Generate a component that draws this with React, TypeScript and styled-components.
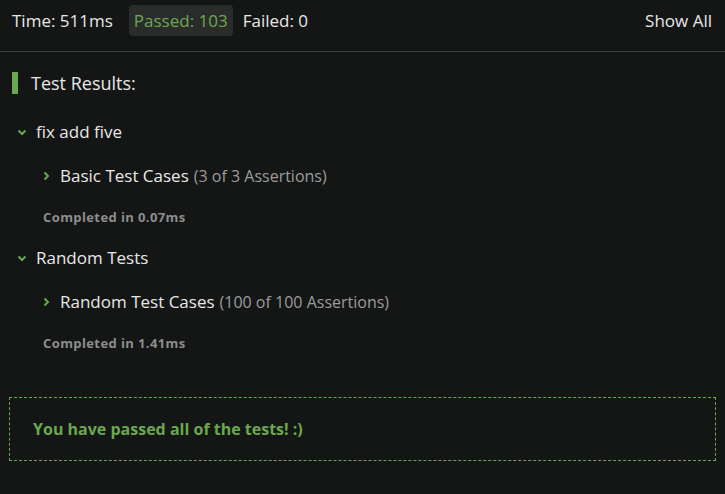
import styled, { createGlobalStyle } from "styled-components";

const GlobalStyle = createGlobalStyle`
  html, body {
    margin: 0;
    padding: 0;
    background: #141515;
  }
  body {
    font-family: "Open Sans", "Noto Sans", sans-serif;
    color: #e8e8e8;
  }
`;

const Pagina = styled.div`
  width: 725px;
  height: 494px;
  background: #141515;
  overflow: hidden;
`;

const Cabecalho = styled.div`
  display: flex;
  align-items: center;
  height: 52px;
  box-sizing: border-box;
  padding: 0 13px 10px 12px;
  border-bottom: 1px solid #3b3c3c;
  font-size: 17px;
  line-height: 22px;
`;

const Info = styled.span`
  margin-right: 16px;
`;

const Selo = styled.span`
  display: inline-flex;
  align-items: center;
  height: 31px;
  padding: 0 5px;
  margin-right: 10px;
  border-radius: 4px;
  background: #2a2c2c;
  color: #6aa84f;
`;

const MostrarTodos = styled.span`
  margin-left: auto;
`;

const Corpo = styled.div`
  padding: 20px 9px 0 9px;
`;

const Titulo = styled.div`
  display: flex;
  align-items: center;
  height: 22px;
  margin-left: 3px;
  padding-left: 13px;
  border-left: 6px solid #6aa84f;
  font-size: 18px;
`;

const Grupo = styled.div<{ $topo: number }>`
  margin-top: ${(p) => p.$topo}px;
`;

const LinhaGrupo = styled.div`
  display: flex;
  align-items: center;
  gap: 9px;
  padding-left: 8px;
  font-size: 17px;
  line-height: 22px;
`;

const LinhaCaso = styled.div`
  display: flex;
  align-items: baseline;
  margin-top: 22px;
  padding-left: 34px;
  font-size: 17px;
  line-height: 22px;
`;

const Seta = styled.span`
  display: inline-flex;
  width: 10px;
  margin-right: 7px;
  align-self: center;
`;

const Assercoes = styled.span`
  margin-left: 5px;
  color: #9c9c9c;
  font-size: 16px;
`;

const Concluido = styled.div`
  margin-top: 22px;
  padding-left: 34px;
  font-size: 13px;
  line-height: 17px;
  font-weight: 700;
  letter-spacing: 0.4px;
  color: #8d8d8d;
`;

const Aviso = styled.div`
  display: flex;
  align-items: center;
  height: 64px;
  box-sizing: border-box;
  margin-top: 45px;
  padding-left: 23px;
  border: 1px dashed #6aa84f;
  color: #6aa84f;
  font-size: 16px;
  font-weight: 700;
`;

const ChevronBaixo = () => (
  <svg width="10" height="7" viewBox="0 0 10 7">
    <path d="M1.5 1.5 L5 5 L8.5 1.5" fill="none" stroke="#6aa84f" strokeWidth="2" />
  </svg>
);

const ChevronDireita = () => (
  <svg width="7" height="10" viewBox="0 0 7 10">
    <path d="M1.5 1.5 L5 5 L1.5 8.5" fill="none" stroke="#6aa84f" strokeWidth="2" />
  </svg>
);

const grupos = [
  { nome: "fix add five", caso: "Basic Test Cases", assercoes: "(3 of 3 Assertions)", tempo: "0.07ms" },
  { nome: "Random Tests", caso: "Random Test Cases", assercoes: "(100 of 100 Assertions)", tempo: "1.41ms" },
];

const App = () => {
  return (
    <Pagina>
      <GlobalStyle />
      <Cabecalho>
        <Info>Time: 511ms</Info>
        <Selo>Passed: 103</Selo>
        <Info>Failed: 0</Info>
        <MostrarTodos>Show All</MostrarTodos>
      </Cabecalho>
      <Corpo>
        <Titulo>Test Results:</Titulo>
        {grupos.map((g, i) => (
          <Grupo key={g.nome} $topo={i === 0 ? 27 : 21}>
            <LinhaGrupo>
              <ChevronBaixo />
              {g.nome}
            </LinhaGrupo>
            <LinhaCaso>
              <Seta>
                <ChevronDireita />
              </Seta>
              {g.caso}
              <Assercoes>{g.assercoes}</Assercoes>
            </LinhaCaso>
            <Concluido>Completed in {g.tempo}</Concluido>
          </Grupo>
        ))}
        <Aviso>You have passed all of the tests! :)</Aviso>
      </Corpo>
    </Pagina>
  );
};

export default App;
